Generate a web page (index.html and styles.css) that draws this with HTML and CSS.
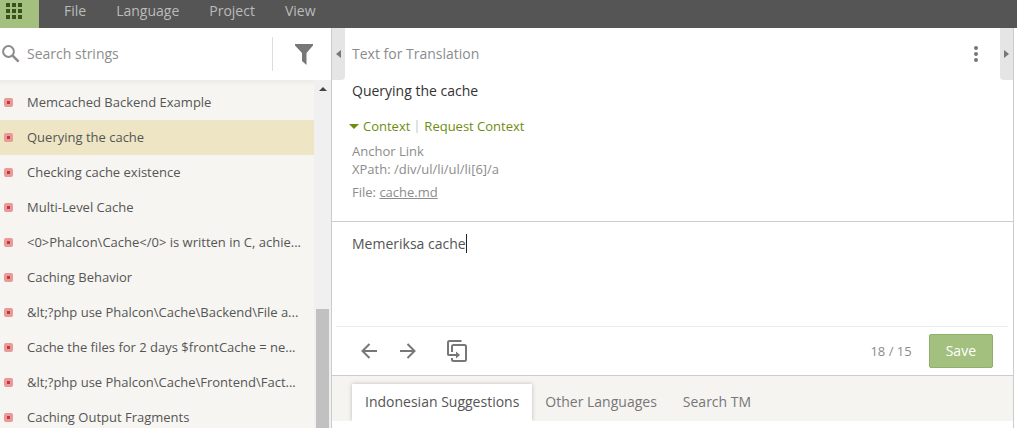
FILE: index.html
```html
<!DOCTYPE html>
<html lang="en">
<head>
<meta charset="utf-8">
<title>Translation editor</title>
<link rel="stylesheet" href="styles.css">
</head>
<body>
<header class="topbar">
  <button class="apps" type="button" aria-label="Apps">
    <svg width="16" height="16" viewBox="0 0 16 16" fill="#37521c"><path d="M0 0h4v4H0zM6 0h4v4H6zM12 0h4v4h-4zM0 6h4v4H0zM6 6h4v4H6zM12 6h4v4h-4zM0 12h4v4H0zM6 12h4v4H6zM12 12h4v4h-4z"/></svg>
  </button>
  <nav class="menu">
    <button type="button">File</button>
    <button type="button">Language</button>
    <button type="button">Project</button>
    <button type="button">View</button>
  </nav>
</header>
<main class="workspace">
  <aside class="sidebar">
    <div class="search">
      <label class="search-icon" for="search" aria-label="Search strings">
        <svg width="18" height="18" viewBox="0 0 18 18" fill="none" stroke="#8c8c8c" stroke-width="2"><circle cx="6.5" cy="6.5" r="5.4"/><path d="M10.6 10.6l6 6" stroke-width="2.5"/></svg>
      </label>
      <input id="search" class="search-input" type="text" placeholder="Search strings">
      <button class="filter" type="button" aria-label="Filter">
        <svg width="18" height="21" viewBox="0 0 18 21" fill="#777"><path d="M0 0h18v1.5L11.5 9v12L7 17V9L0 1.5z"/></svg>
      </button>
    </div>
    <div class="list-area">
      <ul class="strings">
        <li><i class="status"></i><span>Memcached Backend Example</span></li>
        <li class="selected"><i class="status"></i><span>Querying the cache</span></li>
        <li><i class="status"></i><span>Checking cache existence</span></li>
        <li><i class="status"></i><span>Multi-Level Cache</span></li>
        <li><i class="status"></i><span>&lt;0&gt;Phalcon\Cache&lt;/0&gt; is written in C, achie...</span></li>
        <li><i class="status"></i><span>Caching Behavior</span></li>
        <li><i class="status"></i><span>&amp;lt;?php use Phalcon\Cache\Backend\File a...</span></li>
        <li><i class="status"></i><span>Cache the files for 2 days $frontCache = ne...</span></li>
        <li><i class="status"></i><span>&amp;lt;?php use Phalcon\Cache\Frontend\Fact...</span></li>
        <li><i class="status"></i><span>Caching Output Fragments</span></li>
      </ul>
      <div class="scrollbar">
        <svg width="8" height="4" viewBox="0 0 8 4" fill="#444"><path d="M0 4l4-4 4 4z"/></svg>
        <div class="thumb"></div>
      </div>
    </div>
  </aside>
  <section class="editor">
    <div class="editor-head">
      <button class="collapse collapse-left" type="button" aria-label="Collapse list">
        <svg width="5" height="8" viewBox="0 0 5 8" fill="#777"><path d="M5 0v8L0 4z"/></svg>
      </button>
      <h2>Text for Translation</h2>
      <button class="more" type="button" aria-label="More">
        <svg width="4" height="16" viewBox="0 0 4 16" fill="#777"><circle cx="2" cy="2" r="2"/><circle cx="2" cy="8" r="2"/><circle cx="2" cy="14" r="2"/></svg>
      </button>
      <button class="collapse collapse-right" type="button" aria-label="Collapse panel">
        <svg width="5" height="8" viewBox="0 0 5 8" fill="#777"><path d="M0 0v8l5-4z"/></svg>
      </button>
    </div>
    <div class="source">
      <p class="source-text">Querying the cache</p>
      <div class="context-links">
        <svg width="10" height="5" viewBox="0 0 10 5" fill="#6f8c10"><path d="M0 0h10L5 5z"/></svg>
        <a href="#context">Context</a>
        <i class="separator"></i>
        <a href="#request">Request Context</a>
      </div>
      <div id="context" class="context">
        <p>Anchor Link</p>
        <p>XPath: /div/ul/li/ul/li[6]/a</p>
        <p class="file">File: <a href="#file">cache.md</a></p>
      </div>
    </div>
    <div class="translation">
      <textarea aria-label="Translation" spellcheck="false">Memeriksa cache</textarea>
      <i class="caret"></i>
    </div>
    <div class="actions">
      <button type="button" aria-label="Previous">
        <svg width="16" height="16" viewBox="0 0 16 16" fill="none" stroke="#777" stroke-width="2"><path d="M16 8H1.5M8.5 1L1.5 8l7 7"/></svg>
      </button>
      <button class="next" type="button" aria-label="Next">
        <svg width="16" height="16" viewBox="0 0 16 16" fill="none" stroke="#777" stroke-width="2"><path d="M0 8h14.5M7.5 1l7 7-7 7"/></svg>
      </button>
      <button class="copy" type="button" aria-label="Copy source">
        <svg width="20" height="22" viewBox="0 0 20 22" fill="none" stroke="#777" stroke-width="2"><path d="M14.5 1H2.5Q1 1 1 2.5V14.500Q1 15 2.500 15H10"/><path d="M5 12V6.500Q5 5 6.500 5H17.500Q19 5 19 6.500V19.500Q19 21 17.500 21H6.500Q5 21 5 19.500V18"/><path d="M9 11.500l4 3.500-4 3.500z" fill="#777" stroke="none"/></svg>
      </button>
      <span class="count">18 / 15</span>
      <button class="save" type="button">Save</button>
    </div>
    <nav class="tabs">
      <button class="active" type="button">Indonesian Suggestions</button>
      <button type="button">Other Languages</button>
      <button type="button">Search TM</button>
    </nav>
    <div class="results"></div>
  </section>
  <div class="edge"></div>
</main>
</body>
</html>
```
FILE: styles.css
```css
* {
  box-sizing: border-box;
}

body {
  display: flex;
  flex-direction: column;
  height: 100vh;
  margin: 0;
  overflow: hidden;
  background: #fff;
  color: #555;
  font: 14px/20px "Open Sans", "Noto Sans", sans-serif;
}

button {
  padding: 0;
  border: 0;
  background: none;
  color: inherit;
  font: inherit;
}

svg {
  display: block;
  flex: none;
}

p,
h2,
ul {
  margin: 0;
  padding: 0;
}

.topbar {
  display: flex;
  flex: none;
  height: 28px;
  background: #555;
}

.apps {
  width: 39px;
  padding: 3px 0 9px 6px;
  background: #a3c07f;
}

.menu {
  display: flex;
  gap: 30px;
  padding: 1px 0 7px 25px;
  color: #bbb;
}

.workspace {
  display: flex;
  flex: 1;
  min-height: 0;
}

.sidebar {
  display: flex;
  flex: none;
  flex-direction: column;
  width: 332px;
  border-right: 1px solid #ccc;
}

.search {
  display: flex;
  flex: none;
  align-items: center;
  height: 52px;
  padding-left: 2px;
}

.search-input {
  flex: 1;
  min-width: 0;
  padding: 0 0 0 7px;
  border: 0;
  outline: 0;
  color: #555;
  font: inherit;
}

.search-input::placeholder {
  color: #8c8c8c;
  opacity: 1;
}

.filter {
  display: grid;
  place-items: center;
  width: 59px;
  height: 34px;
  padding-left: 3px;
  border-left: 1px solid #ddd;
}

.list-area {
  display: flex;
  flex: 1;
  min-height: 0;
  background: linear-gradient(#ebebe9, #f6f5f2 6px);
}

.strings {
  flex: 1;
  min-width: 0;
  padding-top: 5px;
  overflow: hidden;
  list-style: none;
  font-size: 13px;
}

.strings li {
  display: flex;
  align-items: center;
  gap: 14px;
  height: 35px;
  padding-left: 4px;
  white-space: nowrap;
}

.strings span {
  padding-bottom: 2px;
}

.strings .selected {
  background: #eee5c5;
}

.status {
  width: 9px;
  height: 9px;
  border: 3px solid #e99998;
  border-radius: 2px;
  background: #bd3b3e;
}

.scrollbar {
  display: flex;
  flex-direction: column;
  align-items: center;
  justify-content: space-between;
  width: 17px;
  padding-top: 7px;
  background: #f0f0f0;
}

.thumb {
  width: 13px;
  height: 119px;
  background: #c1c1c1;
}

.editor {
  display: flex;
  flex: 1;
  flex-direction: column;
  min-width: 0;
}

.editor-head {
  display: flex;
  flex: none;
  align-items: center;
  height: 52px;
}

.editor-head h2 {
  flex: 1;
  padding-left: 7px;
  color: #8c8c8c;
  font-size: 14px;
  font-weight: 400;
}

.collapse {
  display: grid;
  place-items: center;
  width: 13px;
  height: 52px;
  background: #e5e5e5;
}

.collapse-left {
  border-radius: 0 0 4px 0;
}

.collapse-right {
  border-radius: 0 0 0 4px;
}

.more {
  padding: 0 22px;
}

.source {
  flex: none;
  padding: 1px 20px 20px;
  border-bottom: 1px solid #ccc;
}

.source-text {
  color: #333;
}

.context-links {
  display: flex;
  align-items: center;
  gap: 4px;
  margin: 15px 0 6px -3px;
  font-size: 13px;
}

.context-links a {
  color: #6f8c10;
  text-decoration: none;
}

.separator {
  width: 2px;
  height: 13px;
  margin: 0 2px;
  background: #dfe3e6;
}

.context {
  color: #8c8c8c;
  font-size: 13px;
  line-height: 18px;
}

.context .file {
  margin-top: 5px;
}

.context a {
  color: inherit;
}

.translation {
  position: relative;
  flex: none;
  margin: 0 5px 0 4px;
  border-bottom: 1px solid #eaeaea;
}

.translation textarea {
  display: block;
  width: 100%;
  height: 104px;
  padding: 12px 16px;
  border: 0;
  outline: 0;
  resize: none;
  background: none;
  color: #555;
  font: inherit;
}

.caret {
  position: absolute;
  top: 12px;
  left: 130px;
  width: 1px;
  height: 19px;
  background: #222;
}

.actions {
  display: flex;
  flex: none;
  align-items: center;
  height: 49px;
  padding: 0 20px 0 29px;
  border-bottom: 1px solid #ccc;
}

.next {
  margin-left: 23px;
}

.copy {
  margin-left: 31px;
}

.count {
  margin-left: auto;
  color: #8c8c8c;
  font-size: 13px;
}

.save {
  height: 34px;
  margin-left: 17px;
  padding: 0 16px;
  border: 1px solid #8fb069;
  border-radius: 2px;
  background: #a3c07f;
  color: #fff;
}

.tabs {
  display: flex;
  flex: none;
  height: 45px;
  padding: 8px 20px 0;
  overflow: hidden;
  background: #f5f4f1;
  color: #777;
}

.tabs button {
  padding: 0 13px 2px;
}

.tabs .active {
  background: #fff;
  box-shadow: 0 0 4px #bbb;
  color: #555;
}

.results {
  flex: 1;
}

.edge {
  flex: none;
  width: 4px;
  border-left: 1px solid #ccc;
}
```
